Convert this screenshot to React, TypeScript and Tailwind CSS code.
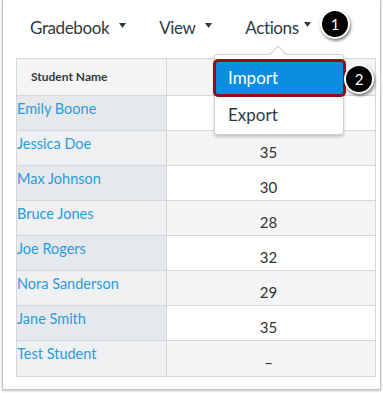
import React from "react"

const students = [
  { name: "Emily Boone", score: "" },
  { name: "Jessica Doe", score: "35" },
  { name: "Max Johnson", score: "30" },
  { name: "Bruce Jones", score: "28" },
  { name: "Joe Rogers", score: "32" },
  { name: "Nora Sanderson", score: "29" },
  { name: "Jane Smith", score: "35" },
  { name: "Test Student", score: "–" },
]

function Caret() {
  return (
    <svg width="7" height="6" viewBox="0 0 7 6" className="block">
      <path d="M0 0 L7 0 L3.5 5 Z" fill="#2d3b45" />
    </svg>
  )
}

function Badge({ n }: { n: string }) {
  return (
    <div className="w-[30px] h-[30px] rounded-full bg-black border-2 border-white flex items-center justify-center text-white text-[15px] shadow-[1px_2px_3px_rgba(0,0,0,0.5)]">
      {n}
    </div>
  )
}

export default function App() {
  return (
    <div className="w-[383px] h-[393px] bg-white font-['Lato','Liberation_Sans',sans-serif]">
      <div className="relative ml-[2px] w-[379px] h-[390px] border-x border-b border-[#c4c4c4] bg-white shadow-[0_1px_2px_rgba(0,0,0,0.25)]">
        {/* Menu bar */}
        <div className="h-[58px] flex items-start pt-[15px] pl-[27px] text-[17px] tracking-[-0.4px] text-[#2d3b45]">
          <div className="flex items-center gap-[10px]">
            <span>Gradebook</span>
            <span className="-mt-[4px]"><Caret /></span>
          </div>
          <div className="flex items-center gap-[10px] ml-[33px]">
            <span>View</span>
            <span className="-mt-[4px]"><Caret /></span>
          </div>
          <div className="flex items-center gap-[5px] ml-[33px]">
            <span>Actions</span>
            <span className="-mt-[6px]"><Caret /></span>
          </div>
        </div>

        {/* Table */}
        <div className="ml-[13px] w-[360px] border border-[#d4d6d8]">
          <div className="flex h-[37px] bg-[#f5f5f5] border-b border-[#d4d6d8]">
            <div className="w-[150px] border-r border-[#d4d6d8] flex items-center pl-[14px] text-[12px] font-bold text-[#2d3b45]">
              Student Name
            </div>
            <div className="flex-1" />
          </div>
          {students.map((s, i) => (
            <div
              key={s.name}
              className={`flex h-[35px] ${i < students.length - 1 ? "border-b border-[#d4d6d8]" : ""}`}
            >
              <div
                className={`w-[150px] border-r border-[#d4d6d8] pt-[2px] text-[14.5px] text-[#2a9be0] ${
                  i % 2 === 0 ? "bg-[#e6e9ec]" : "bg-[#eef0f2]"
                }`}
              >
                {s.name}
              </div>
              <div
                className={`flex-1 flex justify-center pt-[10px] pr-[5px] text-[15px] text-[#333] ${
                  i % 2 === 0 ? "bg-white" : "bg-[#f4f5f6]"
                }`}
              >
                {s.score}
              </div>
            </div>
          ))}
        </div>

        {/* Actions dropdown */}
        <div className="absolute left-[211px] top-[54px] w-[130px] h-[81px] bg-white border border-[#d0d0d0] rounded-[3px] shadow-[0_2px_3px_rgba(0,0,0,0.2)]">
          <div className="absolute -top-[7px] left-[57px] w-[12px] h-[12px] bg-white border-l border-t border-[#d0d0d0] rotate-45" />
          <div className="relative mt-[4px] -ml-[2px] w-[133px] h-[38px] rounded-[5px] border-[3px] border-[#8c1016] bg-[#0a8ee0] flex items-center pl-[12px] text-[17px] text-white">
            Import
          </div>
          <div className="h-[36px] flex items-center pl-[13px] text-[17px] text-[#2d3b45]">Export</div>
        </div>

        {/* Badges */}
        <div className="absolute left-[317px] top-[9px]">
          <Badge n="1" />
        </div>
        <div className="absolute left-[341px] top-[64px]">
          <Badge n="2" />
        </div>
      </div>
    </div>
  )
}
